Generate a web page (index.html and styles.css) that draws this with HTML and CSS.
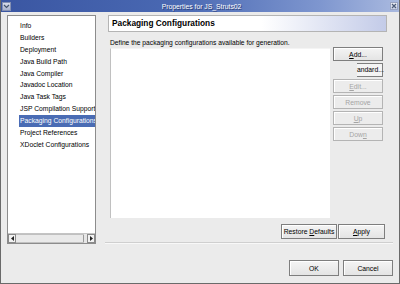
FILE: index.html
```html
<!DOCTYPE html>
<html lang="en">

<head>
    <meta charset="UTF-8">
    <title>Properties for JS_Struts02</title>
    <link rel="stylesheet" href="styles.css">
</head>

<body>
    <div class="window">
        <div class="titlebar">
            <span class="menu-box">
                <svg width="7" height="5" viewBox="0 0 7 5"><path d="M1 1 L3.5 3.5 L6 1" fill="none" stroke="#44546e" stroke-width="1.2"/></svg>
            </span>
            <span class="title">Properties for JS_Struts02</span>
            <span class="close-box">
                <svg width="6" height="6" viewBox="0 0 6 6"><path d="M1 1 L5 5 M5 1 L1 5" stroke="#4b5a78" stroke-width="1.2"/></svg>
            </span>
        </div>

        <div class="main">
            <div class="tree">
                <ul class="tree-list">
                    <li>Info</li>
                    <li>Builders</li>
                    <li>Deployment</li>
                    <li>Java Build Path</li>
                    <li>Java Compiler</li>
                    <li>Javadoc Location</li>
                    <li>Java Task Tags</li>
                    <li>JSP Compilation Support</li>
                    <li class="selected">Packaging Configurations</li>
                    <li>Project References</li>
                    <li>XDoclet Configurations</li>
                </ul>
                <div class="hscroll">
                    <span class="arrow">
                        <svg width="3" height="5" viewBox="0 0 3 5"><path d="M3 0 L0 2.5 L3 5Z" fill="#222"/></svg>
                    </span>
                    <span class="track"><span class="thumb"></span></span>
                    <span class="arrow">
                        <svg width="3" height="5" viewBox="0 0 3 5"><path d="M0 0 L3 2.5 L0 5Z" fill="#222"/></svg>
                    </span>
                </div>
            </div>

            <div class="page">
                <div class="page-header">Packaging Configurations</div>
                <div class="desc">Define the packaging configurations available for generation.</div>
                <div class="content">
                    <div class="list-box"></div>
                    <div class="side-buttons">
                        <button class="btn"><u>A</u>dd...</button>
                        <div class="cut-btn">andard...</div>
                        <button class="btn disabled"><u>E</u>dit...</button>
                        <button class="btn disabled">Remove</button>
                        <button class="btn disabled"><u>U</u>p</button>
                        <button class="btn disabled">Dow<u>n</u></button>
                    </div>
                </div>
                <div class="page-buttons">
                    <button class="btn restore">Restore <u>D</u>efaults</button>
                    <button class="btn apply"><u>A</u>pply</button>
                </div>
                <div class="separator"></div>
            </div>
        </div>

        <div class="dialog-buttons">
            <button class="btn dlg">OK</button>
            <button class="btn dlg">Cancel</button>
        </div>
    </div>
</body>

</html>
```

FILE: styles.css
```css
body {
    margin: 0;
    font-family: "Liberation Sans", Arial, sans-serif;
    font-size: 7px;
    color: #000;
    background: #ebebeb;
}

.window {
    width: 400px;
    height: 284px;
    box-sizing: border-box;
    background: #ebebeb;
    border: 1px solid #6a6a6a;
    border-top: none;
    display: flex;
    flex-direction: column;
}

.titlebar {
    height: 12px;
    flex: none;
    display: flex;
    align-items: center;
    background: linear-gradient(to right, #3a56a2, #4a69b3 45%, #7e96cf 80%, #a9b9df);
}

.menu-box {
    width: 9px;
    height: 9px;
    margin-left: 1px;
    background: linear-gradient(#d8dcea, #a9b3cf);
    border: 1px solid #8490b2;
    box-sizing: border-box;
    display: flex;
    align-items: center;
    justify-content: center;
}

.title {
    flex: 1;
    text-align: center;
    color: #fff;
    font-size: 6.8px;
    text-shadow: 1px 1px 0 #2c3f78;
    padding-left: 2px;
}

.close-box {
    width: 8px;
    height: 8px;
    margin-right: 1px;
    background: linear-gradient(#eceef5, #c9d0e4);
    border: 1px solid #9aa4c2;
    box-sizing: border-box;
    display: flex;
    align-items: center;
    justify-content: center;
}

.main {
    display: flex;
    height: 232px;
    flex: none;
    padding: 3px 0 0 6px;
}

.tree {
    width: 89px;
    height: 229px;
    box-sizing: border-box;
    border: 1px solid #8c8c8c;
    background: #fff;
    display: flex;
    flex-direction: column;
}

.tree-list {
    list-style: none;
    margin: 0;
    padding: 4px 0 0 11px;
    flex: 1;
    overflow: hidden;
    font-size: 6.75px;
}

.tree-list li {
    height: 11.9px;
    line-height: 11.9px;
    padding-left: 1px;
    white-space: nowrap;
    overflow: hidden;
}

.tree-list li.selected {
    background: #4a6cb4;
    color: #fff;
}

.hscroll {
    height: 9px;
    display: flex;
    border-top: 1px solid #c4c4c4;
    background: #e6e6e6;
}

.arrow {
    width: 8px;
    box-sizing: border-box;
    border: 1px solid #8a8a8a;
    background: #f2f2f2;
    display: flex;
    align-items: center;
    justify-content: center;
}

.track {
    flex: 1;
    display: flex;
    border-top: 1px solid #c0c0c0;
    border-bottom: 1px solid #c0c0c0;
    margin-right: 3px;
}

.thumb {
    flex: 1;
    background: #e9e9e9;
    border-right: 1px solid #999;
}

.page {
    margin-left: 12px;
    width: 279px;
    display: flex;
    flex-direction: column;
}

.page-header {
    height: 17px;
    box-sizing: border-box;
    border: 1px solid #b4b4b4;
    background: linear-gradient(to right, #fff 55%, #c3cbe8);
    font-weight: bold;
    font-size: 8.3px;
    line-height: 15px;
    padding-left: 3px;
}

.desc {
    margin: 5px 0 0 2px;
    line-height: 11px;
    height: 11px;
    font-size: 6.7px;
}

.content {
    display: flex;
    gap: 3px;
    margin-left: 2px;
}

.list-box {
    width: 220px;
    height: 170px;
    background: #fff;
    box-sizing: border-box;
    border-left: 1px solid #c0c0c0;
    border-top: 1px solid #f4f4f4;
}

.side-buttons {
    display: flex;
    flex-direction: column;
    gap: 2px;
    width: 50px;
    margin-top: -1px;
}

.btn {
    font-family: "Liberation Sans", Arial, sans-serif;
    font-size: 6.8px;
    color: #000;
    background: linear-gradient(#f4f4f4, #e4e4e4);
    border: 1px solid #7e7e7e;
    box-shadow: inset 1px 1px 0 #fff;
    height: 14px;
    padding: 0;
    margin: 0;
    box-sizing: border-box;
}

.btn.disabled {
    color: #a4a4a4;
    border-color: #b4b4b4;
    background: #ececec;
}

.cut-btn {
    height: 14px;
    margin-left: 24px;
    box-sizing: border-box;
    border: 1px solid #7e7e7e;
    border-left: none;
    background: #f4f4f4;
    text-align: right;
    padding-right: 1px;
    line-height: 12px;
    font-size: 6.8px;
    white-space: nowrap;
}

.page-buttons {
    display: flex;
    justify-content: flex-end;
    gap: 1px;
    margin-top: 6px;
    padding-right: 2px;
}

.restore {
    width: 56px;
    height: 15px;
}

.apply {
    width: 47px;
    height: 15px;
}

.separator {
    margin: 3px -6px 0 -3px;
    border-top: 1px solid #cfcfcf;
    border-bottom: 1px solid #f8f8f8;
}

.dialog-buttons {
    display: flex;
    justify-content: flex-end;
    gap: 4px;
    padding: 13px 6px 0 0;
}

.dlg {
    width: 50px;
    height: 16px;
}
```
